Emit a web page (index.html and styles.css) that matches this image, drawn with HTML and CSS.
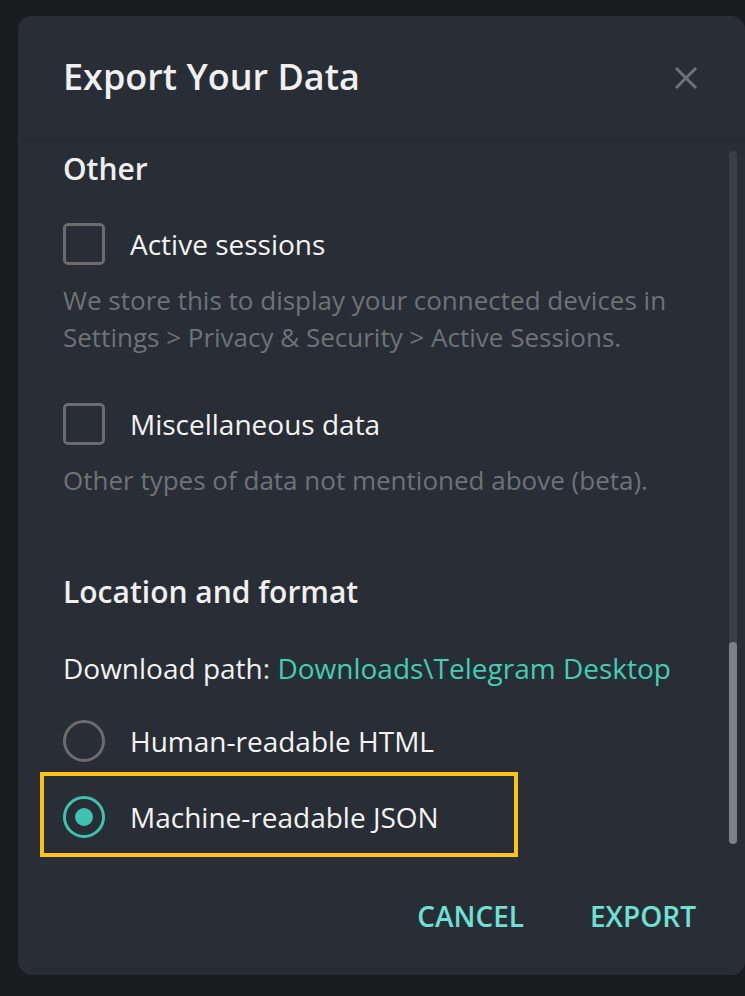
FILE: index.html
```html
<!DOCTYPE html>
<html>
<head>
<meta charset="utf-8">
<link rel="stylesheet" href="styles.css">
</head>
<body>
<div class="dialog">
  <div class="header">
    <h1 class="title">Export Your Data</h1>
    <svg class="close" width="24" height="24" viewBox="0 0 24 24"><path d="M2 2 L22 22 M22 2 L2 22" stroke="#6e7175" stroke-width="3" fill="none"/></svg>
  </div>
  <div class="scroll">
    <div class="content">
      <div class="section-title first">Other</div>
      <div class="option">
        <span class="checkbox"></span>
        <span class="label">Active sessions</span>
      </div>
      <div class="desc first-desc">We store this to display your connected devices in Settings &gt; Privacy &amp; Security &gt; Active Sessions.</div>
      <div class="option misc">
        <span class="checkbox"></span>
        <span class="label">Miscellaneous data</span>
      </div>
      <div class="desc">Other types of data not mentioned above (beta).</div>
      <div class="section-title loc">Location and format</div>
      <div class="path">Download path: <span class="link">Downloads\Telegram Desktop</span></div>
      <div class="option radio-row">
        <span class="radio"></span>
        <span class="label">Human-readable HTML</span>
      </div>
      <div class="option radio-row json">
        <span class="radio checked"><span class="dot"></span></span>
        <span class="label">Machine-readable JSON</span>
        <span class="highlight"></span>
      </div>
    </div>
    <div class="scrollbar"><div class="thumb"></div></div>
  </div>
  <div class="footer">
    <span class="btn">CANCEL</span>
    <span class="btn">EXPORT</span>
  </div>
</div>
</body>
</html>
```

FILE: styles.css
```css
html, body {
  margin: 0;
  padding: 0;
  background: #1a1c20;
  overflow: hidden;
  height: 996px;
}
body {
  font-family: "Open Sans", "Noto Sans", sans-serif;
  color: #f2f2f2;
  padding: 16px 0 0 18px;
  box-sizing: border-box;
}
.dialog {
  width: 727px;
  height: 959px;
  background: #292d35;
  border-radius: 14px;
  display: flex;
  flex-direction: column;
  overflow: hidden;
}
.header {
  height: 125px;
  flex: none;
  display: flex;
  align-items: center;
  justify-content: space-between;
  padding: 0 47px 0 45px;
  border-bottom: 1px solid #24272e;
  box-sizing: border-box;
}
.title {
  margin: 0;
  font-size: 36px;
  font-weight: 600;
  color: #f0f0f0;
  line-height: 44px;
  margin-top: -3px;
}
.close {
  display: block;
}
.scroll {
  flex: 1;
  display: flex;
  min-height: 0;
}
.content {
  flex: 1;
  padding-left: 45px;
  position: relative;
}
.section-title {
  font-size: 30px;
  font-weight: 600;
  line-height: 40px;
  color: #f0f0f0;
}
.section-title.first {
  margin-top: 8px;
}
.section-title.loc {
  margin-top: 73px;
}
.option {
  display: flex;
  align-items: center;
  height: 42px;
  gap: 25px;
  margin-top: 34px;
  font-size: 28px;
  position: relative;
}
.option.misc {
  margin-top: 47px;
}
.checkbox {
  width: 42px;
  height: 42px;
  box-sizing: border-box;
  border: 3px solid #6c6c6e;
  border-radius: 5px;
  flex: none;
}
.label {
  color: #f4f4f4;
}
.desc {
  margin-top: 17px;
  font-size: 26px;
  line-height: 37px;
  color: #6e7377;
  width: 640px;
}
.path {
  margin-top: 38px;
  font-size: 28px;
  line-height: 37px;
  color: #f2f2f2;
}
.link {
  color: #42cdb6;
}
.radio-row {
  margin-top: 33px;
}
.radio-row.json {
  margin-top: 34px;
}
.radio {
  width: 42px;
  height: 42px;
  box-sizing: border-box;
  border: 3px solid #6c6c6e;
  border-radius: 50%;
  flex: none;
  display: flex;
  align-items: center;
  justify-content: center;
}
.radio.checked {
  border-color: #3fc3b0;
}
.dot {
  width: 18px;
  height: 18px;
  border-radius: 50%;
  background: #3fc3b0;
}
.highlight {
  position: absolute;
  left: -23px;
  top: -24px;
  width: 478px;
  height: 85px;
  box-sizing: border-box;
  border: 4px solid #fcc419;
}
.scrollbar {
  width: 8px;
  margin: 10px 8px 30px 0;
  background: #3b3f45;
  border-radius: 4px;
  display: flex;
  flex-direction: column;
  justify-content: flex-end;
  align-self: flex-start;
  height: 693px;
}
.thumb {
  height: 202px;
  background: #7d8186;
  border-radius: 4px;
}
.footer {
  flex: none;
  height: 100px;
  display: flex;
  justify-content: flex-end;
  align-items: center;
  gap: 66px;
  padding: 0 49px 18px 0;
  box-sizing: border-box;
}
.btn {
  font-size: 28px;
  font-weight: 600;
  color: #6fe0d4;
}
```
